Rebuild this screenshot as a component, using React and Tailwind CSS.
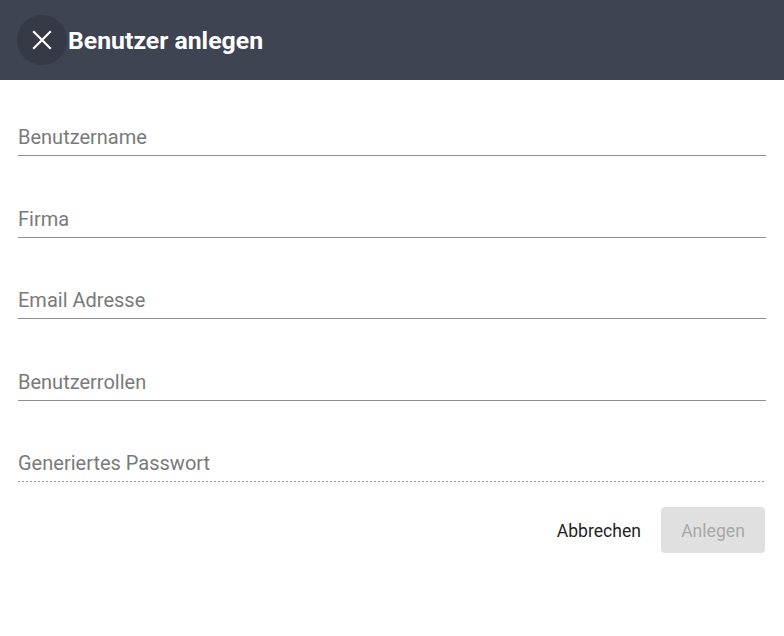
import { useState } from "react"

const fields = [
  { name: "username", label: "Benutzername" },
  { name: "company", label: "Firma" },
  { name: "email", label: "Email Adresse" },
  { name: "roles", label: "Benutzerrollen" },
  { name: "password", label: "Generiertes Passwort", disabled: true },
]

export default function App() {
  const [values, setValues] = useState({})

  return (
    <div className="w-[784px] h-[636px] bg-white font-['Roboto',sans-serif]">
      <div className="h-[80px] bg-[#3e4452] flex items-center pl-[17px]">
        <button className="w-[50px] h-[50px] rounded-full bg-[#363a46] flex items-center justify-center text-white">
          <svg width="20" height="20" viewBox="0 0 20 20" fill="none" stroke="currentColor" strokeWidth="2.2" strokeLinecap="square">
            <path d="M2 2L18 18M18 2L2 18" />
          </svg>
        </button>
        <h1 className="ml-[1px] pt-[2px] text-white text-[24.8px] font-bold">Benutzer anlegen</h1>
      </div>

      <div className="px-[18px] pt-[45px] flex flex-col gap-[50.5px]">
        {fields.map((f) => (
          <div
            key={f.name}
            className={
              f.disabled
                ? "h-[31px] pb-[1px] bg-[linear-gradient(to_right,#9a9a9a_50%,transparent_50%)] bg-[length:4px_1px] bg-repeat-x bg-bottom"
                : "h-[31px] border-b border-[#8f8f8f]"
            }
          >
            <input
              className="block w-full h-[24px] text-[20px] leading-[24px] text-[#333] placeholder:text-[#7a7a7a] outline-none bg-transparent"
              placeholder={f.label}
              disabled={f.disabled}
              value={values[f.name] || ""}
              onChange={(e) => setValues({ ...values, [f.name]: e.target.value })}
            />
          </div>
        ))}
      </div>

      <div className="flex justify-end items-center gap-[4px] px-[19px] mt-[25px]">
        <button className="h-[46px] px-[16px] pt-[3px] text-[17.6px] font-normal text-[#1f1f1f] rounded">Abbrechen</button>
        <button disabled className="h-[46px] w-[104px] pt-[3px] text-[17.6px] font-normal text-[#a8a8a8] bg-[#e0e0e0] rounded-[4px]">
          Anlegen
        </button>
      </div>
    </div>
  )
}
